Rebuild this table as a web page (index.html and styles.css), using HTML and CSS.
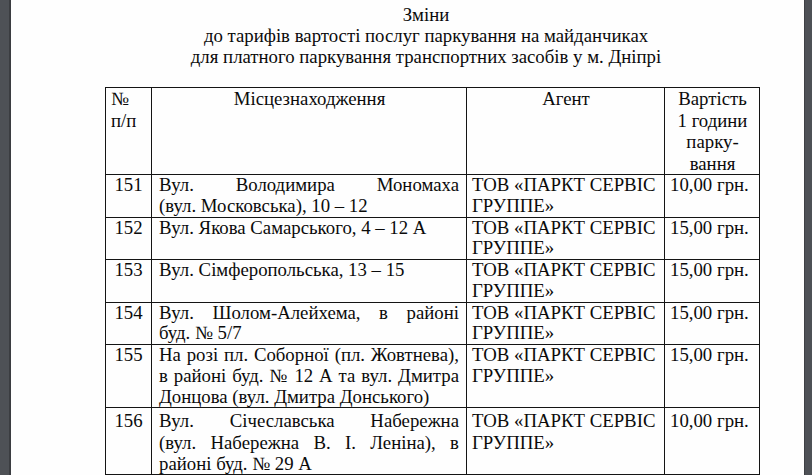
FILE: index.html
```html
<!DOCTYPE html>
<html lang="uk">
<head>
<meta charset="utf-8">
<title>Зміни до тарифів</title>
<link rel="stylesheet" href="styles.css">
</head>
<body>
<div class="viewer">
  <div class="gutter gutter-left"></div>
  <main class="page">
    <header class="title">
      <p>Зміни</p>
      <p>до тарифів вартості послуг паркування на майданчиках</p>
      <p>для платного паркування транспортних засобів у м. Дніпрі</p>
    </header>
    <table class="tariffs">
      <colgroup>
        <col class="c-num"><col class="c-loc"><col class="c-agent"><col class="c-price">
      </colgroup>
      <thead>
        <tr>
          <th class="num-head">№<br>п/п</th>
          <th>Місцезнаходження</th>
          <th>Агент</th>
          <th>Вартість<br>1 години<br>парку-<br>вання</th>
        </tr>
      </thead>
      <tbody>
        <tr>
          <td class="num">151</td>
          <td class="loc">Вул. Володимира Мономаха (вул.&nbsp;Московська), 10&nbsp;– 12</td>
          <td>ТОВ «ПАРКТ СЕРВІС ГРУППЕ»</td>
          <td>10,00 грн.</td>
        </tr>
        <tr>
          <td class="num">152</td>
          <td class="loc">Вул. Якова Самарського, 4&nbsp;– 12&nbsp;А</td>
          <td>ТОВ «ПАРКТ СЕРВІС ГРУППЕ»</td>
          <td>15,00 грн.</td>
        </tr>
        <tr>
          <td class="num">153</td>
          <td class="loc">Вул. Сімферопольська, 13&nbsp;– 15</td>
          <td>ТОВ «ПАРКТ СЕРВІС ГРУППЕ»</td>
          <td>15,00 грн.</td>
        </tr>
        <tr>
          <td class="num">154</td>
          <td class="loc">Вул. Шолом-Алейхема, в районі буд.&nbsp;№&nbsp;5/7</td>
          <td>ТОВ «ПАРКТ СЕРВІС ГРУППЕ»</td>
          <td>15,00 грн.</td>
        </tr>
        <tr>
          <td class="num">155</td>
          <td class="loc">На розі пл. Соборної (пл.&nbsp;Жовтнева), в районі буд.&nbsp;№&nbsp;12&nbsp;А та вул.&nbsp;Дмитра Донцова (вул.&nbsp;Дмитра Донського)</td>
          <td>ТОВ «ПАРКТ СЕРВІС ГРУППЕ»</td>
          <td>15,00 грн.</td>
        </tr>
        <tr>
          <td class="num">156</td>
          <td class="loc">Вул. Січеславська Набережна (вул.&nbsp;Набережна В.&nbsp;І.&nbsp;Леніна), в районі буд.&nbsp;№&nbsp;29&nbsp;А</td>
          <td>ТОВ «ПАРКТ СЕРВІС ГРУППЕ»</td>
          <td>10,00 грн.</td>
        </tr>
      </tbody>
    </table>
  </main>
  <div class="gutter gutter-right"></div>
</div>
</body>
</html>
```

FILE: styles.css
```css
html, body {
  margin: 0;
  height: 100%;
  overflow: hidden;
}
body {
  font-family: "Liberation Serif", "Times New Roman", serif;
  color: #0b0b0b;
  background: #fff;
}
.viewer {
  display: flex;
  height: 475px;
}
.gutter {
  background: #4e5156;
  flex: none;
}
.gutter-left {
  width: 9px;
  border-right: 2px solid #3b3d41;
}
.gutter-right {
  width: 7px;
  border-left: 1px solid #3e4044;
}
.page {
  flex: 1;
  background: #fefefe;
  padding-top: 4px;
}
.title {
  text-align: center;
  font-size: 18.8px;
  line-height: 21px;
  padding-left: 37px;
}
.title p {
  margin: 0;
}
.tariffs {
  margin: 20px 0 0 94px;
  border-collapse: collapse;
  table-layout: fixed;
  width: 654px;
  font-size: 18.8px;
  line-height: 20.75px;
}
.c-num { width: 46px; }
.c-loc { width: 315px; }
.c-agent { width: 198px; }
.c-price { width: 95px; }
.tariffs th, .tariffs td {
  border: 1.5px solid #141414;
  vertical-align: top;
  padding: 0 4px 0 5px;
  font-weight: normal;
}
.tariffs th {
  text-align: center;
  line-height: 21.5px;
}
.tariffs th.num-head {
  text-align: left;
  padding-left: 5px;
}
.tariffs td.num {
  text-align: center;
  padding: 0;
}
.tariffs td.loc {
  text-align: justify;
  padding: 0 7px 0 7px;
}
.tariffs tbody tr:last-child td {
  padding-top: 2px;
  line-height: 21.3px;
}
```
